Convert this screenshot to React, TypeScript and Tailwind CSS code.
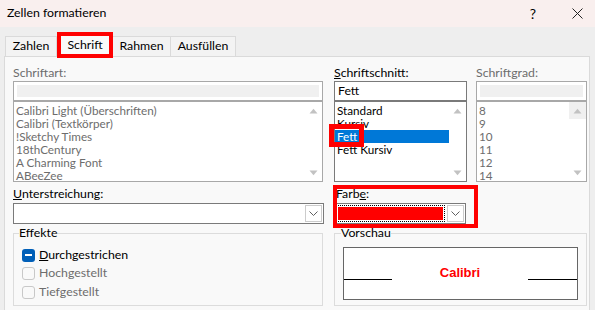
import React from 'react';

function Up() {
  return (
    <svg width="9" height="6" viewBox="0 0 9 6"><path d="M0.5 5.5 L4.5 0.8 L8.5 5.5 Z" fill="#c2c2c2" /></svg>
  );
}
function Down() {
  return (
    <svg width="9" height="6" viewBox="0 0 9 6"><path d="M0.5 0.5 L4.5 5.2 L8.5 0.5 Z" fill="#c2c2c2" /></svg>
  );
}
function Chevron() {
  return (
    <svg width="9" height="5" viewBox="0 0 9 5"><path d="M0.5 0.5 L4.5 4.5 L8.5 0.5" fill="none" stroke="#606060" strokeWidth="1" /></svg>
  );
}

function ListBox({ items, enabled, selected, upBg }: { items: string[]; enabled?: boolean; selected?: number; upBg?: boolean }) {
  return (
    <div className={`h-[81px] border bg-white flex ${enabled ? 'border-[#7a7a7a]' : 'border-[#a8a8a8]'}`}>
      <div className="flex-1 pt-[2px] flex flex-col text-[11.7px]">
        {items.map((t, i) => (
          <div
            key={t}
            className={`h-[13px] leading-[13px] pl-[2px] whitespace-nowrap ${
              i === selected ? 'bg-[#0078d7] text-white' : enabled ? 'text-black' : 'text-[#6d6d6d]'
            }`}
          >
            {t}
          </div>
        ))}
      </div>
      <div className="w-[17px] flex flex-col justify-between items-center">
        <div className={`w-[17px] h-[17px] flex items-center justify-center ${upBg ? 'bg-[#f0f0f0]' : ''}`}><Up /></div>
        <div className="h-[17px] flex items-center justify-center"><Down /></div>
      </div>
    </div>
  );
}

export default function App() {
  return (
    <div className="w-[595px] h-[310px] overflow-hidden bg-[#eeeeee] flex flex-col font-['Lato',sans-serif] text-[12.3px] text-black">
      {/* title bar */}
      <div className="h-[27px] shrink-0 bg-[#f9efee] flex items-center pl-[7px]">
        <div className="text-[12.3px] leading-none">Zellen formatieren</div>
        <div className="ml-auto text-[14px] leading-none mr-[36px]">?</div>
        <svg width="11" height="11" viewBox="0 0 11 11" className="mr-[12px]">
          <path d="M0.5 0.5 L10.5 10.5 M10.5 0.5 L0.5 10.5" stroke="#222" strokeWidth="1" />
        </svg>
      </div>

      {/* tabs */}
      <div className="h-[29px] shrink-0 flex items-end pl-[5px]">
        <div className="w-[52px] h-[20px] border border-b-0 border-[#dadada] bg-[#f3f3f3] flex items-center justify-center">Zahlen</div>
        <div className="relative z-10 w-[56px] h-[25px] -mb-px border border-b-0 border-[#dadada] bg-[#f9f9f9] flex items-center justify-center">
          Schrift
          <div className="absolute -left-px -top-px w-[56px] h-[26px] border-[4px] border-[#ff0000]" />
        </div>
        <div className="w-[58px] h-[20px] border border-b-0 border-l-0 border-[#dadada] bg-[#f3f3f3] flex items-center justify-center">Rahmen</div>
        <div className="w-[65px] h-[20px] border border-b-0 border-l-0 border-[#dadada] bg-[#f3f3f3] flex items-center justify-center">Ausfüllen</div>
      </div>

      {/* panel */}
      <div className="ml-[4px] w-[586px] flex-1 bg-[#f9f9f9] border border-b-0 border-[#dadada] pl-[8px] pt-[7px]">
        {/* row 1 */}
        <div className="flex">
          <div className="w-[310px]">
            <div className="h-[17px] leading-[17px] text-[#6d6d6d]">Schriftart:</div>
            <div className="h-[20px] border border-[#a8a8a8] bg-white p-[3px]">
              <div className="h-full bg-[#f0f0f0]" />
            </div>
            <ListBox items={['Calibri Light (Überschriften)', 'Calibri (Textkörper)', '!Sketchy Times', '18thCentury', 'A Charming Font', 'ABeeZee']} />
          </div>
          <div className="w-[133px] ml-[11px]">
            <div className="h-[17px] leading-[17px]"><span className="underline">S</span>chriftschnitt:</div>
            <div className="h-[20px] border border-[#7a7a7a] bg-white pl-[3px] leading-[18px]">Fett</div>
            <div className="relative">
              <ListBox enabled selected={2} items={['Standard', 'Kursiv', 'Fett', 'Fett Kursiv']} />
              <div className="absolute left-[-5px] top-[23px] w-[35px] h-[23px] border-[5px] border-[#ff0000]" />
            </div>
          </div>
          <div className="w-[111px] ml-[9px]">
            <div className="h-[17px] leading-[17px] text-[#6d6d6d]">Schriftgrad:</div>
            <div className="h-[20px] border border-[#a8a8a8] bg-white p-[3px]">
              <div className="h-full bg-[#f0f0f0]" />
            </div>
            <ListBox upBg items={['8', '9', '10', '11', '12', '14']} />
          </div>
        </div>

        {/* row 2 */}
        <div className="flex pt-[3px]">
          <div className="w-[311px]">
            <div className="h-[17px] leading-[17px]"><span className="underline">U</span>nterstreichung:</div>
            <div className="mt-[1px] h-[21px] border border-[#7a7a7a] bg-white flex justify-end p-px">
              <div className="w-[17px] border border-[#cccccc] flex items-center justify-center"><Chevron /></div>
            </div>
          </div>
          <div className="relative w-[132px] ml-[10px]">
            <div className="h-[17px] leading-[17px] pl-[2px]">Farb<span className="underline">e</span>:</div>
            <div className="mt-[1px] h-[21px] border border-[#7a7a7a] bg-white flex p-px gap-[2px]">
              <div className="flex-1 border border-dotted border-black p-px">
                <div className="h-full bg-[#ff0000]" />
              </div>
              <div className="w-[17px] border border-[#cccccc] flex items-center justify-center"><Chevron /></div>
            </div>
            <div className="absolute left-[-1px] top-0 w-[145px] h-[43px] border-[4px] border-[#ff0000]" />
          </div>
        </div>

        {/* row 3 */}
        <div className="flex mt-[2px]">
          <fieldset className="w-[310px] h-[80px] border border-[#dcdcdc]">
            <legend className="ml-[5px] leading-[14px] px-0">Effekte</legend>
            <div className="pt-[6px] pl-[8px] flex flex-col">
              <div className="h-[18px] flex items-center gap-[4px]">
                <div className="w-[13px] h-[13px] rounded-[3px] bg-[#005fb8] flex items-center justify-center">
                  <div className="w-[7px] h-[1.5px] bg-white" />
                </div>
                <span className="text-[12.3px]"><span className="underline">D</span>urchgestrichen</span>
              </div>
              <div className="h-[19px] flex items-center gap-[4px] text-[#6d6d6d]">
                <div className="w-[13px] h-[13px] rounded-[3px] border border-[#c8c8c8]" />
                <span className="text-[12.3px]">Hochgestellt</span>
              </div>
              <div className="h-[18px] flex items-center gap-[4px] text-[#6d6d6d]">
                <div className="w-[13px] h-[13px] rounded-[3px] border border-[#c8c8c8]" />
                <span className="text-[12.3px]">Tiefgestellt</span>
              </div>
            </div>
          </fieldset>
          <fieldset className="w-[253px] h-[80px] ml-[11px] border border-[#dcdcdc]">
            <legend className="ml-[6px] leading-[14px] px-0">Vorschau</legend>
            <div className="mx-[8px] mt-[7px] h-[53px] border border-[#666666] bg-white flex justify-between">
              <div className="w-[48px] h-px bg-black mt-[31px]" />
              <div className="mt-[18px] leading-[14px] text-[13px] font-bold text-[#ff0000] font-['Liberation_Sans',sans-serif]">Calibri</div>
              <div className="w-[49px] h-px bg-black mt-[31px]" />
            </div>
          </fieldset>
        </div>
      </div>
    </div>
  );
}
